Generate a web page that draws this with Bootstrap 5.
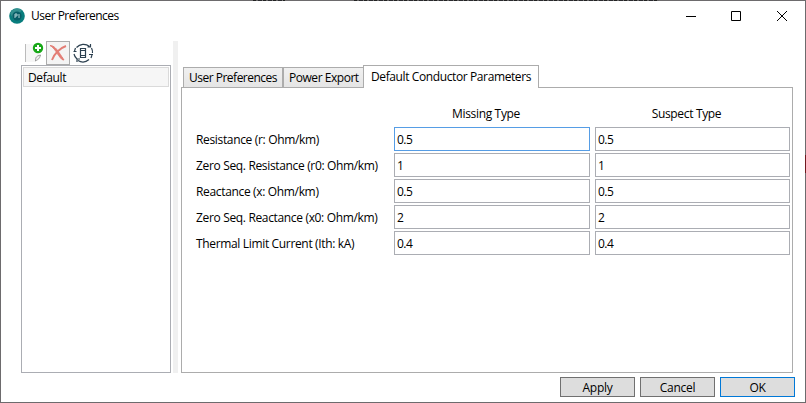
<!DOCTYPE html>
<html lang="en">
<head>
<meta charset="utf-8">
<title>User Preferences</title>
<link href="https://cdn.jsdelivr.net/npm/bootstrap@5.3.0/dist/css/bootstrap.min.css" rel="stylesheet">
<style>
html,body{height:100%;overflow:hidden}
body{font:12px/16px "Open Sans","Noto Sans",sans-serif;letter-spacing:-.34px;color:#000;background:#fff}
.window{height:403px;border:1px solid #6d6b6d;position:relative}
.behind{position:absolute;top:-1px;height:1px;background:repeating-linear-gradient(90deg,#222 0 3px,#666 3px 5px,#2b2b30 5px 9px,#777 9px 10px)}
.b1{left:252px;width:32px}.b2{left:353px;width:305px}
.edge{position:absolute;right:-1px;top:154px;width:1px;height:18px;background:#70191f}
.titlebar{height:29px;padding:0 18px 0 8px}
.titlebar span{margin-left:6px;letter-spacing:-.52px}
.controls{gap:35px}
.controls svg:last-child{margin-left:1px}
.main{height:343px;padding:11px 0 0 20px}
.side{width:150px}
.tools{height:24px;padding-left:1px}
.del{width:24px;height:24px;border:1px solid #acacac;background:#f4f4f4}
.list{border:1px solid #abadb3;padding:1px}
.item{height:20px;border:1px solid #dadada;background:#f6f6f6;padding:2px 4px 0;letter-spacing:-.4px}
.split{width:5px;margin-left:2px;background:#f0f0f0}
.pane{width:612px;margin-left:3px;padding-top:24px}
.tabs{height:23px;padding-left:2px;margin-bottom:-1px;position:relative}
.tabbtn{height:23px;border:1px solid #acacac;background:linear-gradient(#f0f0f0,#e5e5e5);padding:3px 0 0 5px;white-space:nowrap}
.t1{width:100px;height:21px;padding-top:2px;letter-spacing:-.5px}
.t2{width:81px;height:21px;padding-top:2px;letter-spacing:-.46px}
.t3{width:176px;margin-left:-1px;background:#fff;border-bottom:0;padding-left:7px;letter-spacing:-.39px}
.panel{border:1px solid #acacac;padding:13px 2px 0 14px}
.params{display:grid;grid-template-columns:198px 196px 195px;row-gap:2px}
.params>*{height:24px}
.params .c3{margin-left:5px;width:195px}
.heading{text-align:center;padding:5px 12px 0 0}
.name{padding-top:5px;white-space:nowrap}
.field{border:1px solid #abadb3;padding:4px 2px;letter-spacing:-.5px}
.focus{border-color:#569de5}
.foot{padding:4px 10px 0 0;gap:5px}
.push{width:75px;height:20px;border:1px solid #707070;background:#ddd;line-height:19px;text-align:center;padding:0;letter-spacing:-.25px}
.ok{border-color:#0078d7}
svg{display:block;flex:none}
</style>
</head>
<body>
<div class="window d-flex flex-column">
<i class="behind b1"></i><i class="behind b2"></i><i class="edge"></i>
<header class="titlebar d-flex align-items-center">
<svg width="16" height="16" viewBox="0 0 16 16"><circle cx="8" cy="8" r="7.8" fill="#087d7d"/><path d="M1 5a8 8 0 0 1 12-3L5 12z" fill="#34908f"/><circle cx="8" cy="8" r="4.6" fill="#075c66"/><path d="M6 10V6h2v2H6M10 6v4" fill="none" stroke="#acd0d3"/></svg>
<span>User Preferences</span>
<div class="controls d-flex ms-auto align-items-center">
<svg width="10" height="10"><path d="M0 5.500h10" stroke="#000"/></svg>
<svg width="10" height="10"><path d="M.5.5h9v9h-9z" fill="none" stroke="#000"/></svg>
<svg width="10" height="10"><path d="M0 0l10 10M10 0L0 10" stroke="#000"/></svg>
</div>
</header>
<main class="main d-flex flex-shrink-0">
<aside class="side d-flex flex-column">
<div class="tools d-flex">
<svg width="24" height="24"><path d="M4 3h9l4 8v5l-4 5H4z" fill="#f6f6f6"/><path d="M3.500 3v18" stroke="#bbb"/><path d="M13.500 20c0-4 1-5 5-6-1 4-2 4-5 6z" fill="#eee" stroke="#999"/><circle cx="16" cy="7" r="5.200" fill="#18a818"/><path d="M16 4v6M13 7h6" stroke="#fff" stroke-width="2"/></svg>
<div class="del"><svg width="22" height="22"><path d="M3 3.500c4 0 7 4 9 7 2 3 4 6 5 7.500l-2-.5c-3-3-4-5-6-8C7 7 6 5 3 3.500z" fill="#e37d75" stroke="#e37d75"/><path d="M19 4C13 6 7 12 5 18" fill="none" stroke="#e37d75" stroke-width="1.900"/></svg></div>
<svg width="24" height="24" fill="none" stroke="#2c4050" stroke-width="1.200"><path d="M6.500 6.500a9.300 9.300 0 0 1 13-1M4 13a9.300 9.300 0 0 0 3 5M8 19.500a9.300 9.300 0 0 0 11-1M22.500 12a9.300 9.300 0 0 0-1-5M3.500 10.500h3M4.500 10l1-3M20.500 3v3h-3M23 13.500h-4M22 14l-1 3M7 21v-3h3"/><path d="M10.500 7.500h5v9h-5zM10.500 9.500h5M10.500 14.500h5"/></svg>
</div>
<div class="list flex-grow-1"><div class="item">Default</div></div>
</aside>
<div class="split"></div>
<section class="pane d-flex flex-column">
<div class="tabs d-flex align-items-end"><div class="tabbtn t1">User Preferences</div><div class="tabbtn t2">Power Export</div><div class="tabbtn t3">Default Conductor Parameters</div></div>
<div class="panel flex-grow-1"><div class="params">
<div></div><div class="heading">Missing Type</div><div class="heading c3">Suspect Type</div>
<div class="name">Resistance (r: Ohm/km)</div><div class="field focus">0.5</div><div class="field c3">0.5</div>
<div class="name">Zero Seq. Resistance (r0: Ohm/km)</div><div class="field">1</div><div class="field c3">1</div>
<div class="name">Reactance (x: Ohm/km)</div><div class="field">0.5</div><div class="field c3">0.5</div>
<div class="name">Zero Seq. Reactance (x0: Ohm/km)</div><div class="field">2</div><div class="field c3">2</div>
<div class="name">Thermal Limit Current (Ith: kA)</div><div class="field">0.4</div><div class="field c3">0.4</div>
</div></div>
</section>
</main>
<footer class="foot d-flex justify-content-end"><button class="push">Apply</button><button class="push">Cancel</button><button class="push ok">OK</button></footer>
</div>
<script src="https://cdn.jsdelivr.net/npm/bootstrap@5.3.0/dist/js/bootstrap.bundle.min.js"></script>
</body>
</html>
